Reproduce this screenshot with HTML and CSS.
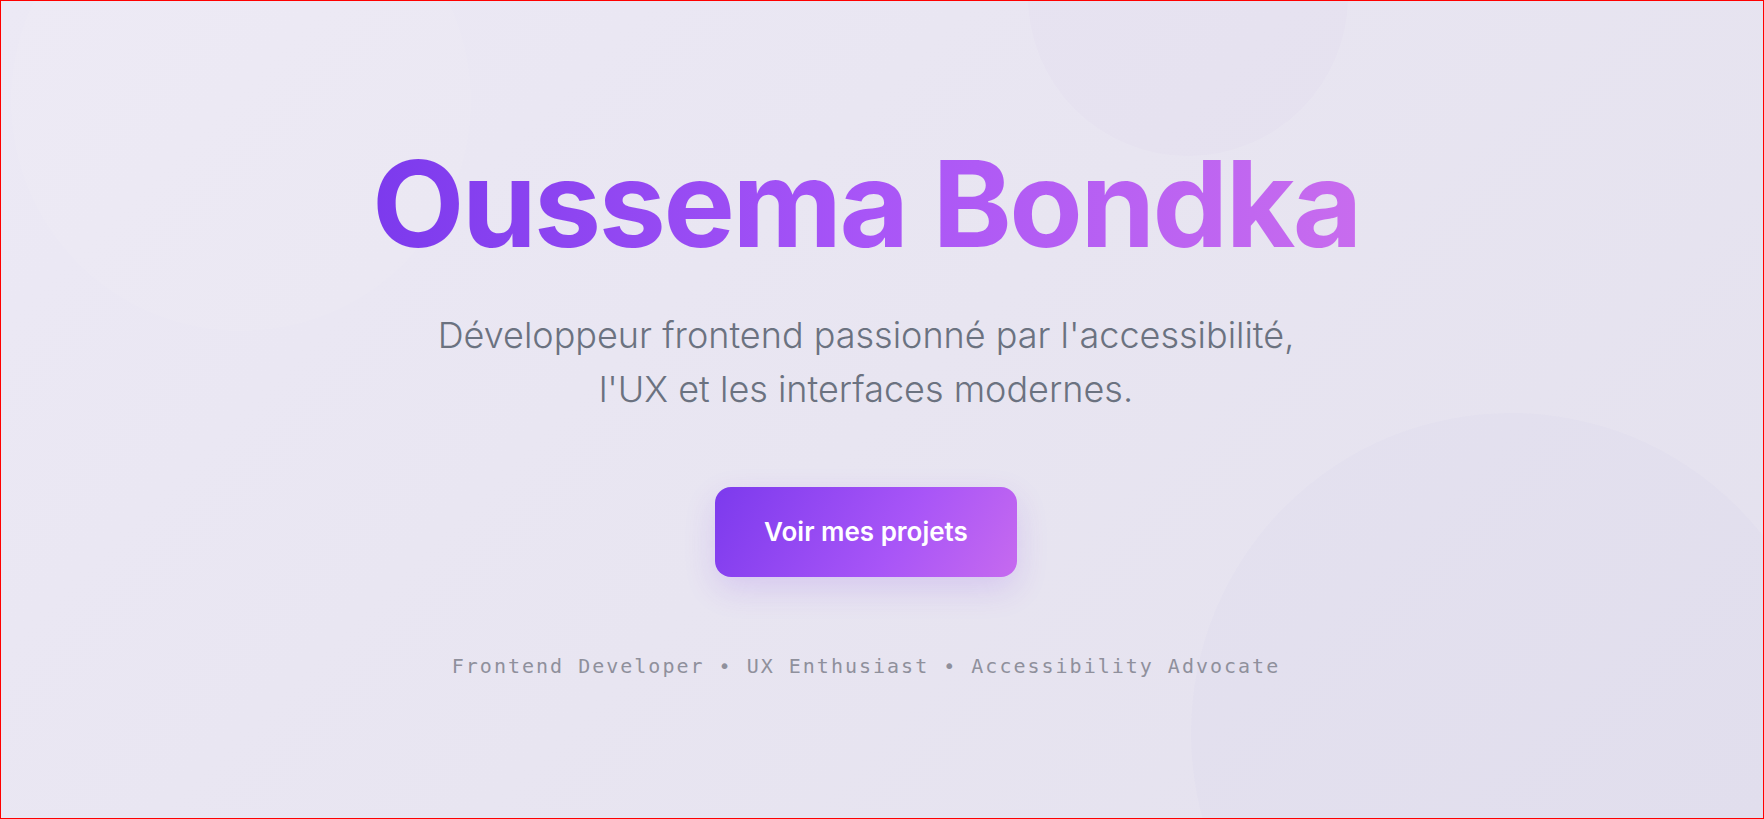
FILE: index.html
```html
<!DOCTYPE html>
<html lang="fr">
<head>
<meta charset="utf-8">
<title>Oussema Bondka</title>
<link rel="stylesheet" href="styles.css">
</head>
<body>
<main class="hero">
  <div class="blob blob-left"></div>
  <div class="blob blob-top"></div>
  <div class="blob blob-bottom"></div>
  <div class="hero-content">
    <h1 class="hero-title">Oussema Bondka</h1>
    <p class="hero-subtitle">Développeur frontend passionné par l'accessibilité,<br>l'UX et les interfaces modernes.</p>
    <a class="hero-button" href="#projets">Voir mes projets</a>
    <p class="hero-tagline">Frontend Developer • UX Enthusiast • Accessibility Advocate</p>
  </div>
</main>
</body>
</html>
```

FILE: styles.css
```css
* { box-sizing: border-box; }
html, body { margin: 0; padding: 0; }
body {
  font-family: Inter, "Noto Sans", sans-serif;
  background: #eae7f3;
}
.hero {
  position: relative;
  overflow: hidden;
  height: 100vh;
  border: 1px solid #ff0000;
  background: linear-gradient(135deg, #ece9f5 0%, #e8e5f1 50%, #e4e1ee 100%);
  display: flex;
  align-items: center;
  justify-content: center;
  padding-right: 32px;
}
.blob {
  position: absolute;
  border-radius: 50%;
  pointer-events: none;
}
.blob-left {
  width: 460px; height: 460px;
  left: 10px; top: -130px;
  background: rgba(255, 255, 255, 0.07);
}
.blob-top {
  width: 320px; height: 320px;
  left: 1027px; top: -165px;
  background: rgba(120, 90, 190, 0.015);
}
.blob-bottom {
  width: 640px; height: 640px;
  left: 1190px; top: 412px;
  background: rgba(120, 90, 190, 0.018);
}
.hero-content {
  position: relative;
  display: flex;
  flex-direction: column;
  align-items: center;
  text-align: center;
}
.hero-title {
  margin: 0;
  font-size: 120px;
  line-height: 132px;
  font-weight: 700;
  letter-spacing: -0.021em;
  background: linear-gradient(90deg, #7c3aed 0%, #a855f7 50%, #c86cee 100%);
  -webkit-background-clip: text;
  background-clip: text;
  color: transparent;
}
.hero-subtitle {
  margin: 38px 0 0;
  font-size: 36px;
  line-height: 54px;
  font-weight: 300;
  color: #6b7280;
}
.hero-button {
  margin-top: 71px;
  display: block;
  padding: 30px 49px;
  font-size: 26px;
  line-height: 30px;
  font-weight: 600;
  color: #ffffff;
  text-decoration: none;
  border-radius: 16px;
  background: linear-gradient(120deg, #7c3aed 0%, #a855f7 60%, #c66aef 100%);
  box-shadow: 0 12px 32px rgba(124, 58, 237, 0.16);
}
.hero-tagline {
  margin: 74px 0 0;
  font-family: "DejaVu Sans Mono", "Liberation Mono", monospace;
  font-size: 20px;
  line-height: 30px;
  letter-spacing: 2px;
  color: #8f909c;
}
```
